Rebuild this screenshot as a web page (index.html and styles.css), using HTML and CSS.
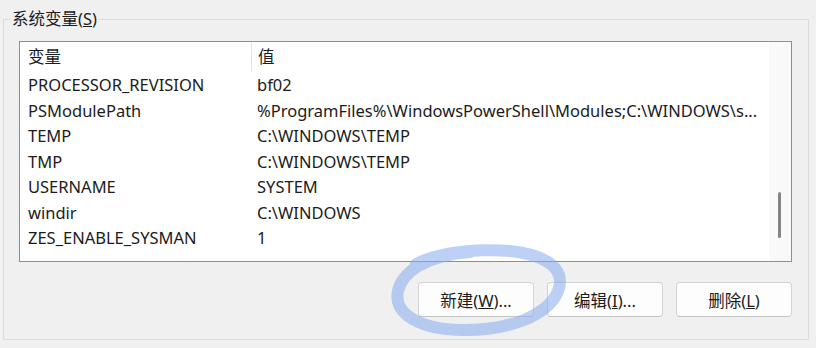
FILE: index.html
```html
<!DOCTYPE html>
<html lang="zh-CN">
  <head>
    <meta charset="UTF-8" />
    <title>系统变量</title>
    <link rel="stylesheet" href="styles.css">
  </head>
  <body>
    <fieldset class="group">
      <legend>系统变量(<u>S</u>)</legend>

      <div class="list">
        <div class="list-body">
          <div class="row head">
            <span class="col-name">变量</span>
            <span class="col-value">值</span>
          </div>
          <div class="row"><span class="col-name">PROCESSOR_REVISION</span><span class="col-value">bf02</span></div>
          <div class="row"><span class="col-name">PSModulePath</span><span class="col-value">%ProgramFiles%\WindowsPowerShell\Modules;C:\WINDOWS\s...</span></div>
          <div class="row"><span class="col-name">TEMP</span><span class="col-value">C:\WINDOWS\TEMP</span></div>
          <div class="row"><span class="col-name">TMP</span><span class="col-value">C:\WINDOWS\TEMP</span></div>
          <div class="row"><span class="col-name">USERNAME</span><span class="col-value">SYSTEM</span></div>
          <div class="row"><span class="col-name">windir</span><span class="col-value">C:\WINDOWS</span></div>
          <div class="row"><span class="col-name">ZES_ENABLE_SYSMAN</span><span class="col-value">1</span></div>
        </div>
        <div class="scroll">
          <div class="thumb"></div>
        </div>
      </div>

      <div class="actions">
        <button type="button">新建(<u>W</u>)...</button>
        <button type="button">编辑(<u>I</u>)...</button>
        <button type="button">删除(<u>L</u>)</button>
      </div>
    </fieldset>

    <!-- hand drawn highlight round the first button -->
    <svg class="mark" width="816" height="348" viewBox="0 0 816 348">
      <path d="M416 264 C 448 248, 518 244, 548 262 C 572 278, 558 306, 524 320 C 488 334, 432 334, 408 316 C 390 302, 396 280, 418 266 C 436 256, 454 253, 470 252"
            fill="none" stroke="#86aaec" stroke-width="12" stroke-linecap="round" opacity="0.55" />
    </svg>
  </body>
</html>
```

FILE: styles.css
```css
body {
  margin: 0;
  padding-top: 9px;
  background: #f0f0f0;
  font-family: "Noto Sans", "Noto Sans CJK SC", sans-serif;
  font-size: 16.5px;
  color: #1b1b1b;
  height: 348px;
  overflow: hidden;
}
.group {
  margin: 0 7px 0 3px;
  padding: 12px 16px 22px 15px;
  border: 1px solid #dcdcdc;
  min-width: 0;
}
.group legend {
  margin-left: -8px;
  padding: 0 1px;
  line-height: 20px;
}
.list {
  display: flex;
  height: 219px;
  background: #fff;
  border: 1px solid #8e8e8e;
}
.list-body {
  flex: 1;
  overflow: hidden;
}
.row {
  display: flex;
  height: 25.5px;
  line-height: 25.5px;
  white-space: nowrap;
}
.row.head {
  height: 30px;
  line-height: 30px;
}
.col-name {
  width: 223px;
  padding-left: 8px;
  flex-shrink: 0;
}
.col-value {
  padding-left: 6px;
}
.head .col-value {
  border-left: 1px solid #e5e5e5;
}
.scroll {
  width: 22px;
  background: #f9f9f9;
  display: flex;
  justify-content: center;
  align-items: flex-end;
  padding-bottom: 23px;
  box-sizing: border-box;
}
.thumb {
  width: 3px;
  height: 46px;
  background: #858585;
  border-radius: 2px;
  margin-left: -1px;
}
.actions {
  display: flex;
  justify-content: flex-end;
  gap: 13px;
  margin-top: 20px;
}
.actions button {
  width: 116px;
  height: 35px;
  background: #fdfdfd;
  border: 1px solid #d3d3d3;
  border-bottom-color: #c4c4c4;
  border-radius: 4px;
  font-family: inherit;
  font-size: 16.5px;
  color: #1b1b1b;
  padding: 0;
}
.mark {
  position: absolute;
  left: 0;
  top: 0;
  pointer-events: none;
}
```
